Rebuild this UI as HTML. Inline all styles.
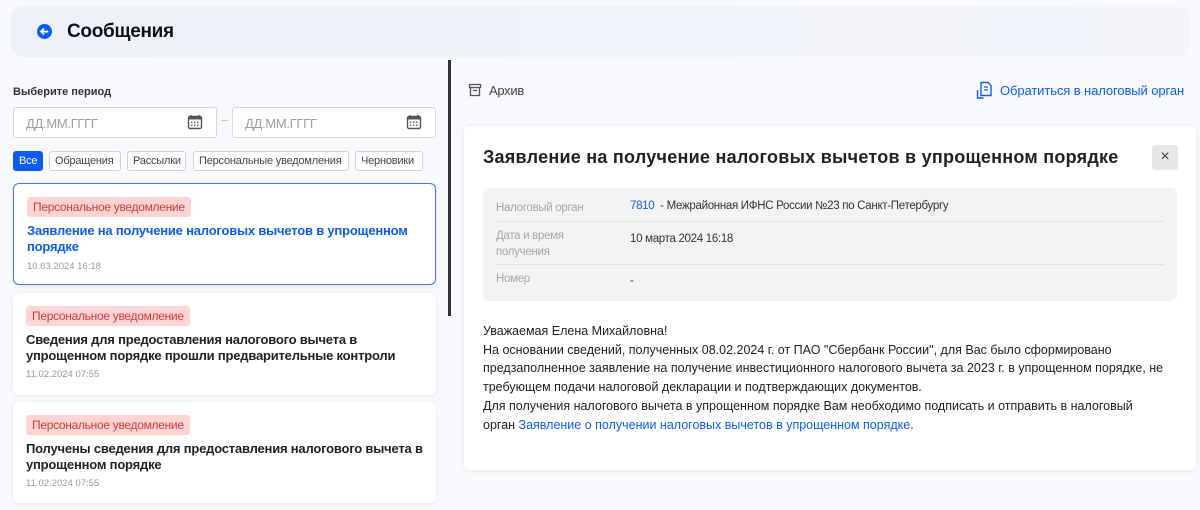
<!DOCTYPE html>
<html><head><meta charset="utf-8"><style>
*{box-sizing:border-box;margin:0;padding:0}
body{width:1200px;height:510px;overflow:hidden;background:#f8f9fc;font-family:"Liberation Sans",sans-serif;color:#222;position:relative}
.abs{position:absolute}
.hdr{left:10px;top:6px;width:1180px;height:51px;border-radius:14px;background:linear-gradient(90deg,#eef1f9,#f3f5fb);}
.inp{top:107px;height:31px;background:#fff;border:1px solid #d6d8dc;border-radius:3px;font-size:13px;color:#9a9ea5;padding:8px 12px;letter-spacing:-.3px}
.tab{top:151px;height:20px;border:1px solid #cfd2d6;border-radius:3px;background:#fff;font-size:11px;color:#444;padding:3px 5px;letter-spacing:-.2px}
.card{left:13px;width:423px;background:#fff;border-radius:6px;box-shadow:0 1px 4px rgba(0,0,0,.08)}
.tag{position:absolute;left:13px;top:13px;height:20px;background:#fdd3d3;color:#d23c3c;font-size:12px;padding:3px 6px;border-radius:3px;letter-spacing:-.3px}
.ct{position:absolute;left:13px;top:39px;width:400px;font-size:13px;font-weight:bold;line-height:16px;letter-spacing:-.2px}
.cd{position:absolute;left:13px;font-size:9.5px;color:#999}
.row{position:absolute;left:13px;width:668px;border-top:1px solid #e0e1e3}
.lbl{position:absolute;left:13px;font-size:11.5px;color:#a3a6aa;line-height:16px;letter-spacing:-.3px}
.val{position:absolute;left:147px;font-size:11.5px;color:#333;letter-spacing:-.3px}
</style></head><body>
<div class="abs hdr"></div>
<svg class="abs" style="left:37px;top:24px" width="15" height="15" viewBox="0 0 16 16"><circle cx="8" cy="8" r="8" fill="#0d5cf2"/><path d="M12 8H4.5M7.5 4.8 4.3 8l3.2 3.2" stroke="#fff" stroke-width="2" fill="none"/></svg>
<div class="abs" style="left:67px;top:21px;font-size:19px;font-weight:bold;color:#111;letter-spacing:-.3px">Сообщения</div>
<div class="abs" style="left:448px;top:60px;width:3px;height:256px;background:#333"></div>

<div class="abs" style="left:13px;top:86px;font-size:11px;font-weight:bold;color:#333">Выберите период</div>
<div class="abs inp" style="left:13px;width:204px">ДД.ММ.ГГГГ</div>
<div class="abs" style="left:221px;top:120px;width:7px;height:1px;background:#ccc"></div>
<div class="abs inp" style="left:232px;width:204px">ДД.ММ.ГГГГ</div>
<svg class="abs" style="left:187px;top:114px" width="16" height="16" viewBox="0 0 16 16"><rect x="1.5" y="2.5" width="13" height="12" rx="1.5" fill="none" stroke="#555" stroke-width="1.4"/><rect x="1.5" y="2.5" width="13" height="3" fill="#555"/><path d="M4 1v3M12 1v3" stroke="#555" stroke-width="1.4"/><g fill="#555"><rect x="4" y="7.5" width="1.5" height="1.3"/><rect x="7" y="7.5" width="1.5" height="1.3"/><rect x="10" y="7.5" width="1.5" height="1.3"/><rect x="4" y="10.5" width="1.5" height="1.3"/><rect x="7" y="10.5" width="1.5" height="1.3"/><rect x="10" y="10.5" width="1.5" height="1.3"/></g></svg>
<svg class="abs" style="left:406px;top:114px" width="16" height="16" viewBox="0 0 16 16"><rect x="1.5" y="2.5" width="13" height="12" rx="1.5" fill="none" stroke="#555" stroke-width="1.4"/><rect x="1.5" y="2.5" width="13" height="3" fill="#555"/><path d="M4 1v3M12 1v3" stroke="#555" stroke-width="1.4"/><g fill="#555"><rect x="4" y="7.5" width="1.5" height="1.3"/><rect x="7" y="7.5" width="1.5" height="1.3"/><rect x="10" y="7.5" width="1.5" height="1.3"/><rect x="4" y="10.5" width="1.5" height="1.3"/><rect x="7" y="10.5" width="1.5" height="1.3"/><rect x="10" y="10.5" width="1.5" height="1.3"/></g></svg>

<div class="abs tab" style="left:13px;width:30px;background:#0d5cf2;border-color:#0d5cf2;color:#fff">Все</div>
<div class="abs tab" style="left:49px;width:72px">Обращения</div>
<div class="abs tab" style="left:127px;width:59px">Рассылки</div>
<div class="abs tab" style="left:193px;width:156px">Персональные уведомления</div>
<div class="abs tab" style="left:355px;width:68px">Черновики</div>

<div class="abs card" style="top:183px;height:102px;border:1px solid #3b7bf0">
<div class="tag">Персональное уведомление</div>
<div class="ct" style="color:#0d5cf2">Заявление на получение налоговых вычетов в упрощенном порядке</div>
<div class="cd" style="top:77px">10.03.2024 16:18</div></div>
<div class="abs card" style="top:293px;height:102px">
<div class="tag">Персональное уведомление</div>
<div class="ct">Сведения для предоставления налогового вычета в упрощенном порядке прошли предварительные контроли</div>
<div class="cd" style="top:76px">11.02.2024 07:55</div></div>
<div class="abs card" style="top:402px;height:101px">
<div class="tag">Персональное уведомление</div>
<div class="ct">Получены сведения для предоставления налогового вычета в упрощенном порядке</div>
<div class="cd" style="top:76px">11.02.2024 07:55</div></div>

<svg class="abs" style="left:468px;top:83px" width="14" height="14" viewBox="0 0 14 14"><rect x="1.5" y="1.5" width="11" height="3" fill="none" stroke="#555" stroke-width="1.3"/><path d="M2.5 4.5v8h9v-8M5 7.5h4" fill="none" stroke="#555" stroke-width="1.3"/></svg>
<div class="abs" style="left:489px;top:83px;font-size:13px;color:#444;letter-spacing:-.3px">Архив</div>
<svg class="abs" style="left:976px;top:81px" width="16" height="19" viewBox="0 0 16 19"><path d="M5 1.5h7l3 3v10H5z" fill="none" stroke="#0d5cf2" stroke-width="1.4"/><path d="M8 6h4M8 9h4" stroke="#0d5cf2" stroke-width="1.3"/><path d="M1.5 9v8h6" fill="none" stroke="#0d5cf2" stroke-width="1.4"/></svg>
<div class="abs" style="left:1000px;top:83px;font-size:13px;color:#0d5cf2;letter-spacing:-.1px">Обратиться в налоговый орган</div>

<div class="abs" style="left:464px;top:126px;width:732px;height:344px;background:#fff;border-radius:6px;box-shadow:0 1px 5px rgba(0,0,0,.08)"></div>
<div class="abs" style="left:483px;top:147px;font-size:18px;font-weight:bold;color:#222;letter-spacing:.25px">Заявление на получение налоговых вычетов в упрощенном порядке</div>
<div class="abs" style="left:1152px;top:145px;width:26px;height:25px;background:#e6e7e9;border-radius:3px;text-align:center;font-size:16px;line-height:24px;color:#444">×</div>
<div class="abs" style="left:483px;top:188px;width:694px;height:113px;background:#f2f3f3;border-radius:6px">
<div class="lbl" style="top:12px">Налоговый орган</div>
<div class="val" style="top:12px"><span style="color:#0d5cf2">7810</span>&nbsp; - Межрайонная ИФНС России №23 по Санкт-Петербургу</div>
<div class="row" style="top:33px"></div>
<div class="lbl" style="top:40px">Дата и время<br>получения</div>
<div class="val" style="top:45px">10 марта 2024 16:18</div>
<div class="row" style="top:76px"></div>
<div class="lbl" style="top:83px">Номер</div>
<div class="val" style="top:87px">-</div>
</div>
<div class="abs" style="left:483px;top:322px;width:700px;font-size:12.5px;line-height:18.7px;color:#222;letter-spacing:0">Уважаемая Елена Михайловна!<br>На основании сведений, полученных 08.02.2024 г. от ПАО "Сбербанк России", для Вас было сформировано предзаполненное заявление на получение инвестиционного налогового вычета за 2023 г. в упрощенном порядке, не требующем подачи налоговой декларации и подтверждающих документов.<br>Для получения налогового вычета в упрощенном порядке Вам необходимо подписать и отправить в налоговый<br>орган <span style="color:#0d5cf2">Заявление о получении налоговых вычетов в упрощенном порядке</span>.</div>
</body></html>
